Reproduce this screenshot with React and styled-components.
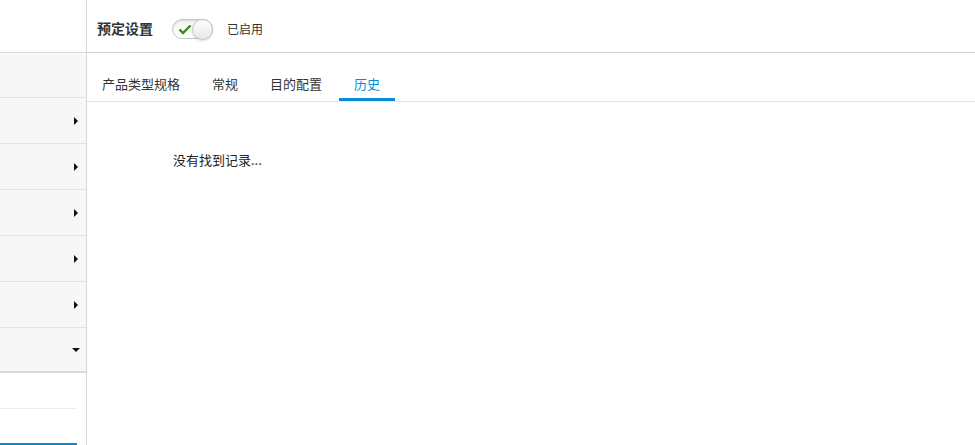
import React from 'react';
import styled, { createGlobalStyle } from 'styled-components';

const Global = createGlobalStyle`
	html, body { margin: 0; padding: 0; height: 100%; background: #fff; }
	body {
		font-family: "Noto Sans CJK SC", "Noto Sans", "Liberation Sans", sans-serif;
		color: #333;
		overflow: hidden;
	}
	#root { height: 100%; }
`;

const Page = styled.div`
	display: flex;
	height: 445px;
	width: 975px;
	overflow: hidden;
`;

const Sidebar = styled.aside`
	width: 86px;
	flex: none;
	border-right: 1px solid #d6d6d6;
	display: flex;
	flex-direction: column;
`;
const SideTop = styled.div`
	height: 52px;
	border-bottom: 1px solid #dcdcdc;
`;
const SideRow = styled.div`
	height: ${ p => p.h || 45 }px;
	background: #f7f7f7;
	border-bottom: ${ p => p.last ? '2px solid #dadada' : '1px solid #e2e2e2' };
	display: flex;
	align-items: center;
	justify-content: flex-end;
	padding-right: 8px;
`;
const Arrow = styled.span`
	width: 0;
	height: 0;
	${ p => p.down
		? 'border-left: 4px solid transparent; border-right: 4px solid transparent; border-top: 4px solid #111; margin-right: -2px;'
		: 'border-top: 4px solid transparent; border-bottom: 4px solid transparent; border-left: 4px solid #111; margin-right: 0;' }
`;
const SubList = styled.div`
	margin-right: 9px;
`;
const SubItem = styled.div`
	height: ${ p => p.active ? 34 : 35 }px;
	border-bottom: ${ p => p.active ? '2px solid #0a8bd6' : '1px solid #eeeeee' };
`;

const Main = styled.main`
	flex: 1;
	display: flex;
	flex-direction: column;
	min-width: 0;
`;
const Header = styled.div`
	height: 53px;
	box-sizing: border-box;
	padding: 4px 0 0 10px;
	border-bottom: 1px solid #cfcfcf;
	display: flex;
	align-items: center;
`;
const Title = styled.h1`
	margin: 0 19px 0 0;
	font-size: 14px;
	font-weight: bold;
	color: #333;
	line-height: 20px;
`;
const Toggle = styled.div`
	position: relative;
	width: 39px;
	height: 18px;
	border: 1px solid #c6c6c6;
	border-radius: 10px;
	background: linear-gradient(#f4f4f4, #ffffff);
	box-shadow: inset 0 1px 2px rgba(0, 0, 0, 0.12);
	margin-top: 1px;
`;
const Check = styled.svg`
	position: absolute;
	left: 5px;
	top: 4px;
`;
const Knob = styled.span`
	position: absolute;
	right: -1px;
	top: -1px;
	width: 19px;
	height: 19px;
	border-radius: 50%;
	border: 1px solid #c4c4c4;
	background: linear-gradient(#ffffff, #e6e6e6);
	box-shadow: 0 1px 2px rgba(0, 0, 0, 0.15);
`;
const Status = styled.span`
	margin-left: 14px;
	font-size: 12px;
	color: #333;
`;

const Tabs = styled.div`
	display: flex;
	margin-top: 13px;
	border-bottom: 1px solid #e4e4e4;
`;
const Tab = styled.div`
	padding: 2px 15px 0;
	margin-right: 2px;
	height: 35px;
	box-sizing: border-box;
	display: flex;
	align-items: center;
	font-size: 13px;
	color: ${ p => p.active ? '#0a8bd6' : '#333' };
	border-bottom: 3px solid ${ p => p.active ? '#0a8bd6' : 'transparent' };
`;
const Empty = styled.div`
	margin: 48px 0 0 86px;
	font-size: 13px;
	color: #222;
`;

const tabs = [ '产品类型规格', '常规', '目的配置', '历史' ];

const App = () =>
{
	return (
		<Page>
			<Global />
			<Sidebar>
				<SideTop />
				<SideRow h={ 44 } />
				<SideRow><Arrow /></SideRow>
				<SideRow><Arrow /></SideRow>
				<SideRow><Arrow /></SideRow>
				<SideRow><Arrow /></SideRow>
				<SideRow><Arrow /></SideRow>
				<SideRow h={ 43 } last><Arrow down /></SideRow>
				<SubList>
					<SubItem />
					<SubItem active />
				</SubList>
			</Sidebar>
			<Main>
				<Header>
					<Title>预定设置</Title>
					<Toggle>
						<Check width="14" height="11" viewBox="0 0 14 11">
							<path d="M1.5 5.5 L5 9 L12.5 1.5" fill="none" stroke="#3b8a12" strokeWidth="2.4" />
						</Check>
						<Knob />
					</Toggle>
					<Status>已启用</Status>
				</Header>
				<Tabs>
					{ tabs.map(t => <Tab key={ t } active={ t === '历史' }>{ t }</Tab>) }
				</Tabs>
				<Empty>没有找到记录...</Empty>
			</Main>
		</Page>
	);
};

export default App;
